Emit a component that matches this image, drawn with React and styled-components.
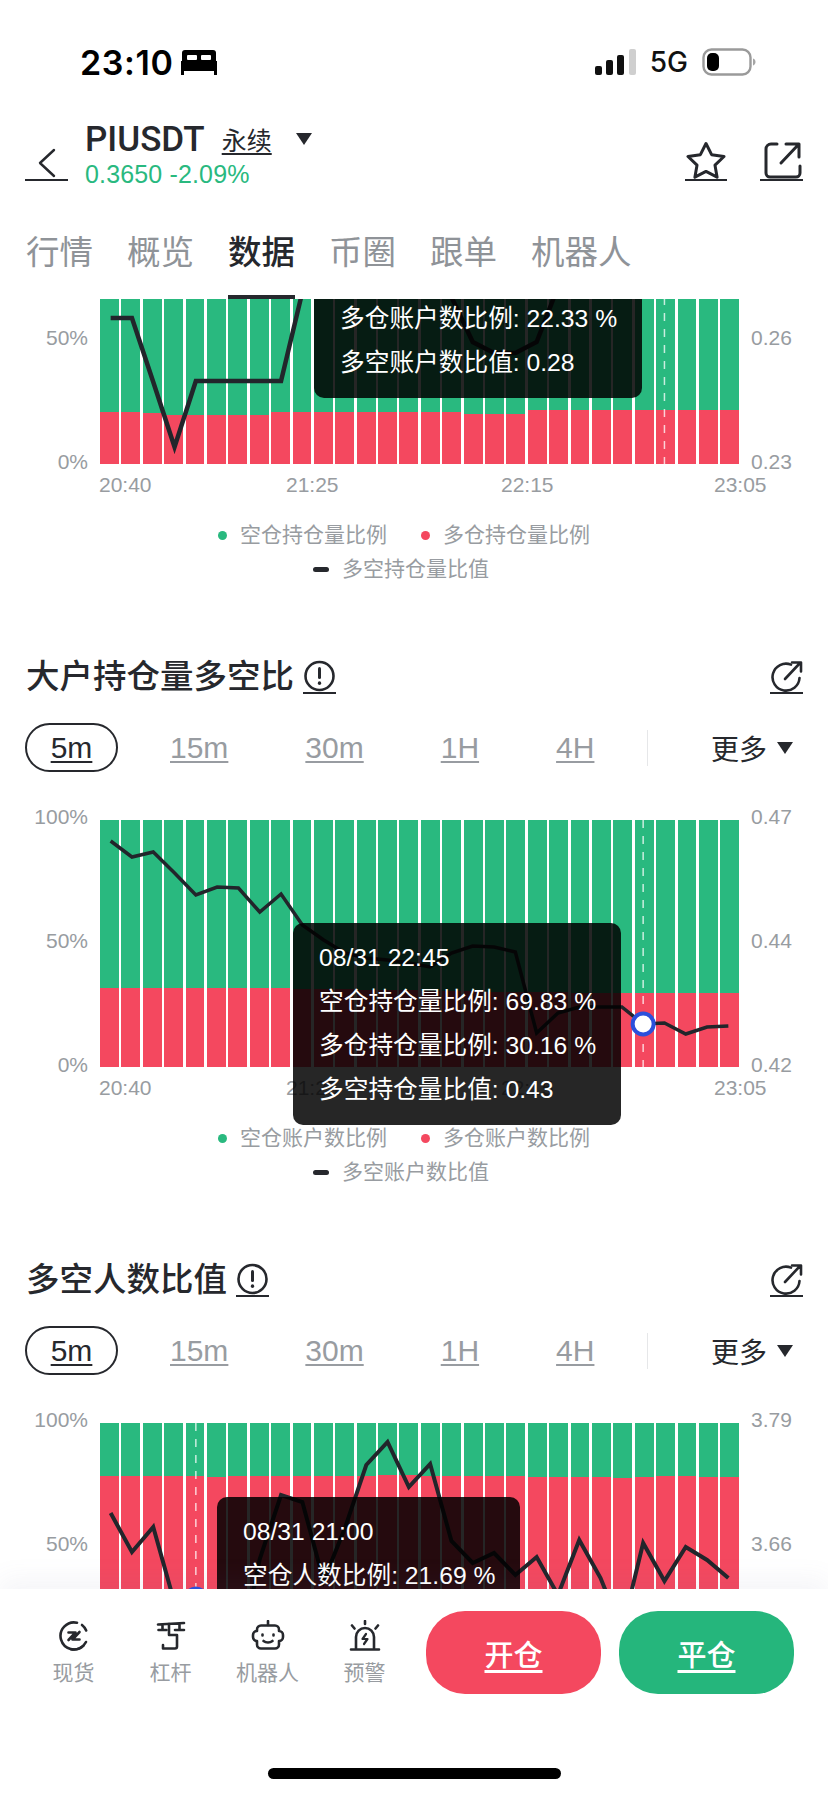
import styled, { createGlobalStyle } from 'styled-components';

const FONT = '"Liberation Sans", "Noto Sans CJK SC", sans-serif';
const INK = '#26282d';
const GRAY = '#989ca1';
const GREEN = '#29b97f';
const RED = '#f4485f';

const GlobalStyle = createGlobalStyle`
  html, body { margin: 0; padding: 0; background: #fff; }
  body { font-family: ${FONT}; color: ${INK}; }
  * { box-sizing: border-box; }
`;

const Page = styled.div`
  width: 828px;
  height: 1796px;
  display: flex;
  flex-direction: column;
  overflow: hidden;
  background: #fff;
`;

const Header = styled.header`
  position: relative;
  z-index: 2;
  background: #fff;
  flex: none;
`;

const StatusBar = styled.div`
  height: 124px;
  display: flex;
  align-items: center;
  padding: 0 72px 0 80px;
`;

const Clock = styled.span`
  font-family: Inter, sans-serif;
  font-size: 34px;
  font-weight: 600;
  letter-spacing: 0.6px;
  color: #000;
  margin-right: 8px;
`;

const StatusRight = styled.div`
  margin-left: auto;
  display: flex;
  align-items: center;
`;

const Network = styled.span`
  font-family: Inter, sans-serif;
  font-size: 28px;
  font-weight: 500;
  color: #111;
  margin: 0 14px 0 13px;
`;

const NavBar = styled.div`
  height: 66px;
  display: flex;
  align-items: flex-end;
  padding: 0 25px 9px;
`;

const IconUnderline = styled.button`
  border: 0;
  background: none;
  padding: 0;
  border-bottom: 2.5px solid ${INK};
  width: ${(p) => p.$w}px;
  height: ${(p) => p.$h}px;
  display: flex;
  align-items: flex-start;
  justify-content: center;
  color: ${INK};
`;

const Pair = styled.div`
  margin-left: 17px;
  margin-bottom: -9px;
`;

const PairTop = styled.div`
  display: flex;
  align-items: center;
  height: 30px;
`;

const PairName = styled.span`
  font-family: Roboto, sans-serif;
  font-size: 35px;
  font-weight: 500;
  color: ${INK};
`;

const PairKind = styled.span`
  margin-left: 17px;
  font-size: 25px;
  text-decoration: underline;
  text-decoration-thickness: 2px;
  text-underline-offset: 3px;
`;

const Caret = styled.span`
  width: 0;
  height: 0;
  border-left: ${(p) => p.$size}px solid transparent;
  border-right: ${(p) => p.$size}px solid transparent;
  border-top: ${(p) => p.$size * 1.5}px solid ${INK};
  margin-left: ${(p) => p.$gap}px;
`;

const PairPrice = styled.div`
  margin-top: 4px;
  height: 32px;
  line-height: 32px;
  font-size: 25px;
  letter-spacing: 0.15px;
  color: ${GREEN};
`;

const NavActions = styled.div`
  margin-left: auto;
  display: flex;
  gap: 33px;
`;

const Tabs = styled.nav`
  height: 109px;
  display: flex;
  gap: 34px;
  padding: 0 26px;
`;

const Tab = styled.span`
  height: 109px;
  padding-top: 43px;
  line-height: 40px;
  font-size: 33.5px;
  color: ${(p) => (p.$active ? INK : '#8f9398')};
  font-weight: ${(p) => (p.$active ? 500 : 400)};
  border-bottom: 4px solid ${(p) => (p.$active ? INK : 'transparent')};
`;

const ScrollBody = styled.main`
  flex: 1;
  min-height: 0;
  overflow: hidden;
`;

const ScrollContent = styled.div`
  margin-top: -82px;
`;

const SectionHead = styled.div`
  margin-top: 76px;
  height: 40px;
  display: flex;
  align-items: center;
  padding: 0 25px 0 ${(p) => p.$left}px;
`;

const SectionTitle = styled.h2`
  margin: 0 9px 0 0;
  font-size: 33.5px;
  font-weight: 500;
  line-height: 40px;
  color: ${INK};
`;

const HeadIcon = styled.button`
  border: 0;
  background: none;
  padding: 0;
  border-bottom: 2px solid ${INK};
  width: 33px;
  height: 34px;
  display: flex;
  justify-content: center;
  color: ${INK};
  margin-left: ${(p) => (p.$end ? 'auto' : '0')};
`;

const TimeRow = styled.div`
  margin-top: 26px;
  height: 49px;
  display: flex;
  align-items: center;
  padding: 0 35px 0 25px;
`;

const TimeOption = styled.span`
  font-size: 30px;
  line-height: 49px;
  color: ${GRAY};
  text-decoration: underline;
  text-decoration-thickness: 2px;
  text-underline-offset: 3px;
  margin-right: 77px;
`;

const ActivePill = styled.span`
  width: 93px;
  height: 49px;
  margin-right: 52px;
  border: 2px solid ${INK};
  border-radius: 25px;
  display: flex;
  align-items: center;
  justify-content: center;
  font-size: 30px;
  color: ${INK};
  text-decoration: underline;
  text-decoration-thickness: 2px;
  text-underline-offset: 3px;
`;

const RowDivider = styled.span`
  width: 1px;
  height: 36px;
  background: #e6e7e9;
  margin-left: -24px;
`;

const More = styled.span`
  margin-left: auto;
  display: flex;
  align-items: center;
  font-size: 28px;
  color: ${INK};
`;

const ChartGrid = styled.div`
  margin-top: 48px;
  display: grid;
  grid-template-columns: 88px 639px auto;
  column-gap: 12px;
`;

const FirstChart = styled(ChartGrid)`
  margin-top: 0;
`;

const YAxis = styled.div`
  margin: -15px 0 -10px;
  display: flex;
  flex-direction: column;
  justify-content: space-between;
  text-align: ${(p) => (p.$right ? 'left' : 'right')};
  font-size: 21px;
  line-height: 24px;
  color: ${GRAY};
`;

const AxisLabel = styled.span`
  min-height: 24px;
`;

const Plot = styled.div`
  position: relative;
  height: 247px;
  display: flex;
  gap: 2.5px;
`;

const Bar = styled.div`
  flex: 1;
  display: flex;
  flex-direction: column;
  background: ${GREEN};
`;

const BarRed = styled.div`
  margin-top: auto;
  height: ${(p) => p.$h}px;
  background: ${RED};
`;

const LineLayer = styled.svg`
  position: absolute;
  left: 0;
  top: 0;
  width: 639px;
  height: 247px;
  overflow: visible;
`;

const Tooltip = styled.div`
  position: absolute;
  left: ${(p) => p.$left}px;
  top: ${(p) => p.$top}px;
  height: 202px;
  padding: 13px 25px 13px 26px;
  display: flex;
  flex-direction: column;
  justify-content: ${(p) => (p.$end ? 'flex-end' : 'flex-start')};
  background: rgba(0, 0, 0, 0.85);
  border-radius: 10px;
  color: #fff;
  font-size: 24.7px;
  line-height: 44px;
  white-space: nowrap;
`;

const XAxis = styled.div`
  margin-top: 9px;
  padding-left: 99px;
  display: grid;
  grid-template-columns: 187px 215px 213px auto;
  font-size: 21px;
  line-height: 24px;
  color: ${GRAY};
`;

const Legend = styled.div`
  margin-top: 26px;
  padding-right: 20px;
  display: flex;
  flex-direction: column;
  align-items: center;
  gap: 10px;
  font-size: 21px;
  line-height: 24px;
  color: ${GRAY};
`;

const LegendRow = styled.div`
  display: flex;
  align-items: center;
  margin-right: ${(p) => p.$shift || 0}px;
`;

const LegendDot = styled.span`
  width: 9px;
  height: 9px;
  border-radius: 50%;
  background: ${(p) => p.$color};
  margin: 0 13px 0 ${(p) => p.$gap}px;
`;

const LegendDash = styled.span`
  width: 16px;
  height: 5px;
  border-radius: 3px;
  background: ${INK};
  margin-right: 13px;
`;

const Footer = styled.footer`
  position: relative;
  z-index: 2;
  flex: none;
  height: 207px;
  background: #fff;
  box-shadow: 0 -10px 24px rgba(110, 110, 160, 0.07);
  display: flex;
  flex-direction: column;
`;

const FooterRow = styled.div`
  display: flex;
  padding: 22px 34px 0 25px;
`;

const ToolItem = styled.div`
  width: 97px;
  padding-top: 9px;
  display: flex;
  flex-direction: column;
  align-items: center;
`;

const ToolLabel = styled.span`
  margin-top: 8px;
  font-size: 21px;
  line-height: 26px;
  color: ${GRAY};
`;

const ActionGroup = styled.div`
  margin-left: 13px;
  display: flex;
  gap: 18px;
`;

const ActionButton = styled.button`
  width: 175px;
  height: 83px;
  border: 0;
  border-radius: 39px;
  background: ${(p) => p.$color};
  color: #fff;
  font-family: ${FONT};
  font-size: 29px;
  font-weight: 500;
  text-decoration: underline;
  text-decoration-thickness: 2.5px;
  text-underline-offset: 4px;
`;

const HomeBar = styled.div`
  width: 293px;
  height: 11px;
  margin: 74px auto 0;
  border-radius: 6px;
  background: #000;
`;

const stroke = { fill: 'none', stroke: 'currentColor', strokeLinecap: 'round', strokeLinejoin: 'round' };

const BedIcon = () => (
  <svg width="36" height="25" viewBox="0 0 36 25">
    <path d="M4 0h28a3 3 0 0 1 3 3v9H1V3a3 3 0 0 1 3-3z" fill="#000" />
    <rect x="6" y="5" width="10" height="5" rx="1" fill="#fff" />
    <rect x="20" y="5" width="10" height="5" rx="1" fill="#fff" />
    <path d="M0 11h36v14h-3v-4H3v4H0z" fill="#000" />
  </svg>
);

const SignalIcon = () => (
  <svg width="42" height="26" viewBox="0 0 42 26">
    <rect x="0" y="17" width="7" height="9" rx="2" fill="#111" />
    <rect x="11" y="11" width="7" height="15" rx="2" fill="#111" />
    <rect x="22" y="6" width="7" height="20" rx="2" fill="#111" />
    <rect x="34" y="0" width="7" height="26" rx="2" fill="#cfcfcf" />
  </svg>
);

const BatteryIcon = () => (
  <svg width="54" height="28" viewBox="0 0 54 28">
    <rect x="1.5" y="1.5" width="47" height="25" rx="8" fill="none" stroke="#9a9a9a" strokeWidth="2.4" />
    <rect x="5" y="5" width="12" height="18" rx="5" fill="#000" />
    <path d="M51 10.5c1.6.6 2.5 1.9 2.5 3.5s-.9 2.9-2.5 3.5z" fill="#a5a5a5" />
  </svg>
);

const BackIcon = () => (
  <svg width="20" height="31" viewBox="0 0 20 31" {...stroke} strokeWidth="2.4">
    <path d="M17 2 3 15l14 13" />
  </svg>
);

const StarIcon = () => (
  <svg width="42" height="38" viewBox="0 0 42 38" {...stroke} strokeWidth="3">
    <path d="M21 2.5l5.6 11.2 12.4 1.8-9 8.7 2.1 12-11.1-5.800-11.100 5.800 2.100-12-9-8.700 12.400-1.800z" />
  </svg>
);

const ShareIcon = () => (
  <svg width="40" height="38" viewBox="0 0 40 38" {...stroke} strokeWidth="3">
    <path d="M15 3H9a5 5 0 0 0-5 5v24a4 4 0 0 0 4 4h26a4 4 0 0 0 4-4v-7" />
    <path d="M19 22 36 4M24 3h13v13" />
  </svg>
);

const InfoIcon = () => (
  <svg width="33" height="32" viewBox="0 0 33 32" {...stroke} strokeWidth="2.6">
    <circle cx="16.500" cy="16" r="14" />
    <path d="M16.500 8.500v9" strokeWidth="3" />
    <path d="M16.500 23v.2" strokeWidth="3.400" />
  </svg>
);

const OutIcon = () => (
  <svg width="33" height="32" viewBox="0 0 33 32" {...stroke} strokeWidth="2.6">
    <path d="M21 4.600A13.500 13.500 0 1 0 29.500 18" />
    <path d="M15 19 30 3M22 2.500h9v9" />
  </svg>
);

const SpotIcon = () => (
  <svg width="32" height="32" viewBox="0 0 32 32" {...stroke} strokeWidth="2.600">
    <path d="M19 2.800A13.500 13.500 0 1 0 25.500 25.600" />
    <path d="M13 29.200A13.500 13.500 0 0 0 28 22M28.200 10.500A13.500 13.500 0 0 0 24 5" />
    <path d="M10.500 12.500h7l-7 7.500M21.500 19.500h-7l7-7.500" />
  </svg>
);

const LeverIcon = () => (
  <svg width="32" height="32" viewBox="0 0 32 32" {...stroke} strokeWidth="2.600">
    <path d="M3 4.500 29 3M7.500 4.500V10M3.500 10h8M24.500 3.500V10M20 10h9" />
    <path d="M14 4v11h8v11.500a2 2 0 0 1-2 2H8V25" />
  </svg>
);

const RobotIcon = () => (
  <svg width="34" height="32" viewBox="0 0 34 32" {...stroke} strokeWidth="2.600">
    <path d="M17 1v4" />
    <path d="M10 5.500h14a4 4 0 0 1 4 4V11a4 4 0 0 1 4 4v2a4 4 0 0 1-4 4v3.500a4 4 0 0 1-4 4H10a4 4 0 0 1-4-4V21a4 4 0 0 1-4-4v-2a4 4 0 0 1 4-4V9.500a4 4 0 0 1 4-4z" />
    <path d="M11.500 14.500v1M22.500 14.500v1M12.500 21c2.500 2 6.500 2 9 0" />
  </svg>
);

const AlarmIcon = () => (
  <svg width="32" height="32" viewBox="0 0 32 32" {...stroke} strokeWidth="2.600">
    <path d="M16 1v3M3 5.500l2.500 3M29 5.500l-2.500 3" />
    <path d="M7 28V17a9 9 0 0 1 18 0v11M2 29.500h28" />
    <path d="M17 14l-3.500 5h5L15 24" strokeWidth="2.200" />
  </svg>
);

const BAR_W = 639 / 30;

function Chart({ Wrapper = ChartGrid, red, line, lineWidth, mark, markY, tip, left, right }) {
  const points = line.map((y, i) => `${(i + 0.5) * BAR_W},${y}`).join(' ');
  const markX = (mark + 0.5) * BAR_W;
  return (
    <Wrapper>
      <YAxis>
        {left.map((t, i) => <AxisLabel key={i}>{t}</AxisLabel>)}
      </YAxis>
      <Plot>
        {red.map((h, i) => (
          <Bar key={i}>
            <BarRed $h={h} />
          </Bar>
        ))}
        <LineLayer viewBox="0 0 639 247">
          <line x1={markX} x2={markX} y1="0" y2="247" stroke="#fff" strokeOpacity="0.75" strokeWidth="1.500" strokeDasharray="8 8" />
          <polyline points={points} fill="none" stroke="#22252b" strokeWidth={lineWidth} strokeLinejoin="miter" />
          <circle cx={markX} cy={markY} r="10.500" fill="#fff" stroke="#2b50dc" strokeWidth="4" />
        </LineLayer>
        <Tooltip $left={tip.left} $top={tip.top} $end={tip.end}>
          {tip.lines.map((t) => <span key={t}>{t}</span>)}
        </Tooltip>
      </Plot>
      <YAxis $right>
        {right.map((t, i) => <AxisLabel key={i}>{t}</AxisLabel>)}
      </YAxis>
    </Wrapper>
  );
}

function XLabels() {
  return (
    <XAxis>
      <span>20:40</span>
      <span>21:25</span>
      <span>22:15</span>
      <span>23:05</span>
    </XAxis>
  );
}

function ChartLegend({ kind }) {
  return (
    <Legend>
      <LegendRow>
        <LegendDot $color={GREEN} $gap={0} />
        <span>空仓{kind}比例</span>
        <LegendDot $color={RED} $gap={34} />
        <span>多仓{kind}比例</span>
      </LegendRow>
      <LegendRow $shift={6}>
        <LegendDash />
        <span>多空{kind}比值</span>
      </LegendRow>
    </Legend>
  );
}

function TimeOptions() {
  return (
    <TimeRow>
      <ActivePill>5m</ActivePill>
      <TimeOption>15m</TimeOption>
      <TimeOption>30m</TimeOption>
      <TimeOption>1H</TimeOption>
      <TimeOption>4H</TimeOption>
      <RowDivider />
      <More>
        更多
        <Caret $size={8} $gap={10} />
      </More>
    </TimeRow>
  );
}

const chart1 = {
  red: [52, 52, 51, 49, 49, 49, 49, 49, 52, 52, 52, 52, 52, 52, 52, 52, 52, 50, 50, 50, 54, 54, 54, 54, 54, 54, 54, 54, 54, 54],
  line: [101, 101, 165, 230, 164, 164, 164, 164, 164, 75, 40, 30, 50, 50, 50, 55, 80, 125, 136, 136, 125, 70, 60, 55, 50, 50, 50, 50, 50, 50],
};

const chart2 = {
  red: [79, 79, 79, 79, 79, 79, 79, 79, 79, 78, 78, 78, 77, 77, 77, 76, 76, 76, 75, 75, 75, 75, 74, 74, 74, 74, 74, 74, 74, 74],
  line: [21, 37, 32, 53, 75, 67, 68, 92, 74, 105, 120, 133, 138, 140, 143, 147, 133, 126, 127, 132, 213, 193, 187, 187, 187, 204, 203, 214, 207, 206],
};

const chart3 = {
  red: [194, 194, 194, 194, 194, 193, 194, 194, 194, 194, 194, 194, 194, 195, 195, 194, 194, 194, 194, 194, 193, 193, 193, 193, 192, 193, 194, 194, 193, 193],
  line: [90, 129, 104, 180, 176, 200, 240, 136, 72, 79, 158, 105, 42, 19, 64, 41, 118, 140, 130, 152, 134, 172, 117, 155, 208, 120, 158, 124, 137, 155],
};

export default function App() {
  return (
    <Page>
      <GlobalStyle />
      <Header>
        <StatusBar>
          <Clock>23:10</Clock>
          <BedIcon />
          <StatusRight>
            <SignalIcon />
            <Network>5G</Network>
            <BatteryIcon />
          </StatusRight>
        </StatusBar>
        <NavBar>
          <IconUnderline $w={43} $h={33}><BackIcon /></IconUnderline>
          <Pair>
            <PairTop>
              <PairName>PIUSDT</PairName>
              <PairKind>永续</PairKind>
              <Caret $size={8} $gap={24} />
            </PairTop>
            <PairPrice>0.3650 -2.09%</PairPrice>
          </Pair>
          <NavActions>
            <IconUnderline $w={42} $h={40}><StarIcon /></IconUnderline>
            <IconUnderline $w={43} $h={40}><ShareIcon /></IconUnderline>
          </NavActions>
        </NavBar>
        <Tabs>
          <Tab>行情</Tab>
          <Tab>概览</Tab>
          <Tab $active>数据</Tab>
          <Tab>币圈</Tab>
          <Tab>跟单</Tab>
          <Tab>机器人</Tab>
        </Tabs>
      </Header>

      <ScrollBody>
        <ScrollContent>
          <Chart
            Wrapper={FirstChart}
            red={chart1.red}
            line={chart1.line}
            lineWidth={4.5}
            mark={26}
            markY={-40}
            left={['', '50%', '0%']}
            right={['', '0.26', '0.23']}
            tip={{ left: 214, top: -21, end: true, lines: ['多仓账户数比例: 22.33 %', '多空账户数比值: 0.28'] }}
          />
          <XLabels />
          <ChartLegend kind="持仓量" />

          <SectionHead $left={26}>
            <SectionTitle>大户持仓量多空比</SectionTitle>
            <HeadIcon><InfoIcon /></HeadIcon>
            <HeadIcon $end><OutIcon /></HeadIcon>
          </SectionHead>
          <TimeOptions />
          <Chart
            red={chart2.red}
            line={chart2.line}
            lineWidth={3.5}
            mark={25}
            markY={204}
            left={['100%', '50%', '0%']}
            right={['0.47', '0.44', '0.42']}
            tip={{
              left: 193,
              top: 103,
              lines: ['08/31 22:45', '空仓持仓量比例: 69.83 %', '多仓持仓量比例: 30.16 %', '多空持仓量比值: 0.43'],
            }}
          />
          <XLabels />
          <ChartLegend kind="账户数" />

          <SectionHead $left={26}>
            <SectionTitle>多空人数比值</SectionTitle>
            <HeadIcon><InfoIcon /></HeadIcon>
            <HeadIcon $end><OutIcon /></HeadIcon>
          </SectionHead>
          <TimeOptions />
          <Chart
            red={chart3.red}
            line={chart3.line}
            lineWidth={4}
            mark={4}
            markY={176}
            left={['100%', '50%', '']}
            right={['3.79', '3.66', '']}
            tip={{ left: 117, top: 74, lines: ['08/31 21:00', '空仓人数比例: 21.69 %'] }}
          />
        </ScrollContent>
      </ScrollBody>

      <Footer>
        <FooterRow>
          <ToolItem><SpotIcon /><ToolLabel>现货</ToolLabel></ToolItem>
          <ToolItem><LeverIcon /><ToolLabel>杠杆</ToolLabel></ToolItem>
          <ToolItem><RobotIcon /><ToolLabel>机器人</ToolLabel></ToolItem>
          <ToolItem><AlarmIcon /><ToolLabel>预警</ToolLabel></ToolItem>
          <ActionGroup>
            <ActionButton $color={RED}>开仓</ActionButton>
            <ActionButton $color="#25b67c">平仓</ActionButton>
          </ActionGroup>
        </FooterRow>
        <HomeBar />
      </Footer>
    </Page>
  );
}
